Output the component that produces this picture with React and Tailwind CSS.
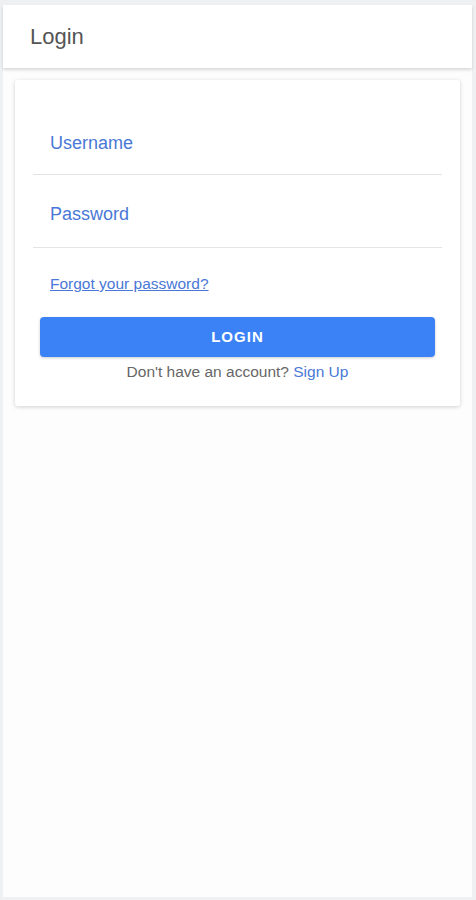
import React from "react";

export default function App() {
  return (
    <div className="w-[476px] h-[900px] bg-[#eff0f1] pl-[3px] pr-[4px] pt-[5px] pb-[3px] font-['Liberation_Sans',Arial,sans-serif]">
      <div className="h-full bg-[#fdfdfd] flex flex-col">
        <header className="h-[63px] bg-white flex items-center px-[27px] shadow-[0_2px_3px_rgba(0,0,0,0.15)] relative z-10">
          <h1 className="text-[22px] text-[#555] leading-none">Login</h1>
        </header>

        <div className="px-[12px] pt-[12px]">
          <div className="bg-white rounded-[3px] shadow-[0_1px_4px_rgba(0,0,0,0.18)] px-[18px] pt-[32px] pb-[24px]">
            <div className="border-b border-[#e3e4e6] h-[63px] flex items-center px-[17px]">
              <input
                className="w-full outline-none text-[18px] text-[#4a78d6] placeholder:text-[#4a78d6] bg-transparent"
                placeholder="Username"
              />
            </div>
            <div className="border-b border-[#e3e4e6] h-[73px] flex items-center px-[17px] pt-[6px]">
              <input
                type="password"
                className="w-full outline-none text-[18px] text-[#4a78d6] placeholder:text-[#4a78d6] bg-transparent"
                placeholder="Password"
              />
            </div>
            <div className="px-[17px] pt-[24px] pb-[22px] leading-[23px]">
              <a href="#" className="text-[15.5px] text-[#4a78d6] underline">
                Forgot your password?
              </a>
            </div>
            <div className="px-[7px]">
              <button className="w-full h-[40px] rounded-[4px] bg-[#3c82f7] text-white text-[15px] font-bold tracking-[0.07em] shadow-[0_1px_3px_rgba(0,0,0,0.2)]">
                LOGIN
              </button>
              <p className="text-center text-[15.5px] text-[#666] mt-[5px] leading-[20px]">
                Don't have an account? <a href="#" className="text-[#4a78d6]">Sign Up</a>
              </p>
            </div>
          </div>
        </div>
      </div>
    </div>
  );
}
